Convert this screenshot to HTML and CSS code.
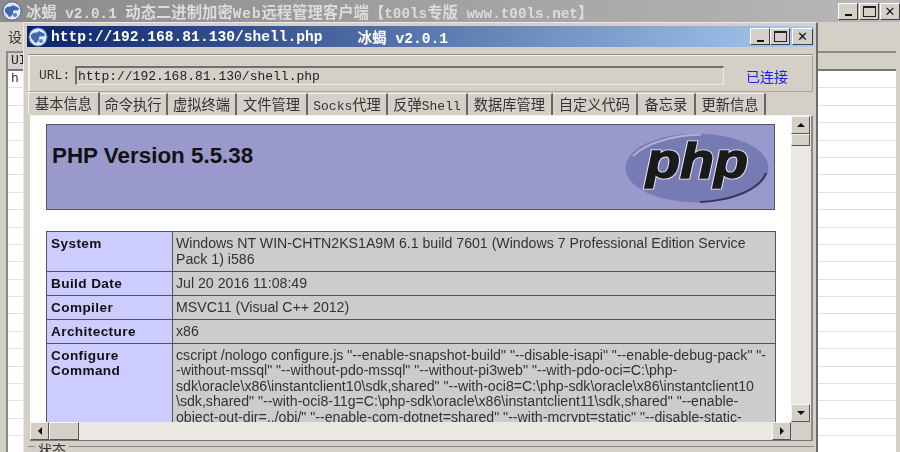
FILE: index.html
```html
<!DOCTYPE html>
<html lang="zh">
<head>
<meta charset="utf-8">
<title>冰蝎</title>
<link rel="stylesheet" href="styles.css">
</head>
<body>
<div class="screen">
  <div class="main-window">
    <div class="main-title">
      <svg class="app-icon" viewBox="0 0 20 20"><circle cx="10" cy="10" r="9.2" fill="#dfe8f4" stroke="#3c5f9e"/><path d="M3 8c3-4 6-1 8-4 2 2 5 1 6 4-2 3-4 0-6 2 1 3-2 6-4 6-1-3-5-4-4-8z" fill="#3f68ad"/><circle cx="13" cy="14" r="2" fill="#5a80bd"/></svg>
      <span class="main-caption">冰蝎<b class="cap-latin"> v2.0.1 </b>动态二进制加密<b class="cap-latin cap-web">Web</b>远程管理客户端【<b class="cap-latin">t00ls</b>专版<b class="cap-latin"> www.t00ls.net</b>】</span>
      <div class="win-buttons main-buttons">
        <span class="win-btn"><i class="g-min"></i></span><span class="win-btn"><i class="g-max"></i></span><span class="win-btn"><i class="g-close">✕</i></span>
      </div>
    </div>
    <div class="menu-row">设</div>
    <div class="list">
      <div class="list-head">UI</div>
      <div class="list-row">h</div>
      <div class="list-row"></div><div class="list-row"></div><div class="list-row"></div><div class="list-row"></div>
      <div class="list-row"></div><div class="list-row"></div><div class="list-row"></div><div class="list-row"></div>
      <div class="list-row"></div><div class="list-row"></div><div class="list-row"></div><div class="list-row"></div>
      <div class="list-row"></div><div class="list-row"></div><div class="list-row"></div><div class="list-row"></div>
      <div class="list-row"></div><div class="list-row"></div><div class="list-row"></div><div class="list-row"></div>
    </div>
  </div>

  <div class="shell-window">
    <div class="shell-title">
      <svg class="app-icon" viewBox="0 0 20 20"><circle cx="10" cy="10" r="9.2" fill="#dfe8f4" stroke="#3c5f9e"/><path d="M3 8c3-4 6-1 8-4 2 2 5 1 6 4-2 3-4 0-6 2 1 3-2 6-4 6-1-3-5-4-4-8z" fill="#3f68ad"/><circle cx="13" cy="14" r="2" fill="#5a80bd"/></svg>
      <span class="shell-url">http://192.168.81.130/shell.php</span>
      <span class="shell-name">冰蝎 v2.0.1</span>
      <div class="win-buttons">
        <span class="win-btn"><i class="g-min"></i></span><span class="win-btn"><i class="g-max"></i></span><span class="win-btn win-close"><i class="g-close">✕</i></span>
      </div>
    </div>
    <div class="url-group">
      <span class="url-label">URL:</span>
      <div class="url-input">http://192.168.81.130/shell.php</div>
      <span class="status-ok">已连接</span>
    </div>
    <div class="tabs">
      <span class="tab tab-active t1">基本信息</span>
      <span class="tab t2">命令执行</span>
      <span class="tab t3">虚拟终端</span>
      <span class="tab t4">文件管理</span>
      <span class="tab t5"><b class="latin">Socks</b>代理</span>
      <span class="tab t6">反弹<b class="latin">Shell</b></span>
      <span class="tab t7">数据库管理</span>
      <span class="tab t8">自定义代码</span>
      <span class="tab t9">备忘录</span>
      <span class="tab t10">更新信息</span>
    </div>
    <div class="panel">
      <div class="page">
        <div class="php-head">
          <h1 class="php-version">PHP Version 5.5.38</h1>
          <svg class="php-logo" viewBox="0 0 144 70">
            <ellipse cx="72" cy="35" rx="71.5" ry="34.5" fill="#777bb3"/>
            <path d="M8 23C24 7 56 2 76 1.5" fill="none" stroke="#aeb1d5" stroke-width="2"/>
            <path d="M141 40c-6 16-34 28-66 29" fill="none" stroke="#34345c" stroke-width="2"/>
            <text x="72" y="45" textLength="102" lengthAdjust="spacingAndGlyphs" class="php-logo-halo">php</text>
            <text x="72" y="45" textLength="102" lengthAdjust="spacingAndGlyphs" class="php-logo-text">php</text>
          </svg>
        </div>
        <table class="info">
          <tr><th>System</th><td>Windows NT WIN-CHTN2KS1A9M 6.1 build 7601 (Windows 7 Professional Edition Service<br>Pack 1) i586</td></tr>
          <tr><th>Build Date</th><td>Jul 20 2016 11:08:49</td></tr>
          <tr><th>Compiler</th><td>MSVC11 (Visual C++ 2012)</td></tr>
          <tr><th>Architecture</th><td>x86</td></tr>
          <tr><th>Configure<br>Command</th><td>cscript /nologo configure.js "--enable-snapshot-build" "--disable-isapi" "--enable-debug-pack" "-<br>-without-mssql" "--without-pdo-mssql" "--without-pi3web" "--with-pdo-oci=C:\php-<br>sdk\oracle\x86\instantclient10\sdk,shared" "--with-oci8=C:\php-sdk\oracle\x86\instantclient10<br>\sdk,shared" "--with-oci8-11g=C:\php-sdk\oracle\x86\instantclient11\sdk,shared" "--enable-<br>object-out-dir=../obj/" "--enable-com-dotnet=shared" "--with-mcrypt=static" "--disable-static-</td></tr>
        </table>
      </div>
      <div class="vbar">
        <span class="sb-btn"><i class="arr arr-up"></i></span>
        <span class="sb-thumb-v"></span>
        <span class="sb-track"></span>
        <span class="sb-btn"><i class="arr arr-down"></i></span>
      </div>
      <div class="hbar">
        <span class="sb-btn"><i class="arr arr-left"></i></span>
        <span class="sb-thumb-h"></span>
        <span class="sb-track"></span>
        <span class="sb-btn"><i class="arr arr-right"></i></span>
      </div>
      <div class="corner"></div>
    </div>
    <div class="status-group"><span class="status-label">状态</span></div>
  </div>
</div>
</body>
</html>
```

FILE: styles.css
```css
* { box-sizing: border-box; }
html, body { margin: 0; padding: 0; }
body { width: 900px; height: 452px; overflow: hidden; background: #d4d0c8; }
.screen {
  position: relative; width: 900px; height: 452px; overflow: hidden;
  font-family: "Liberation Mono", "Noto Sans CJK SC", monospace;
  color: #222; filter: blur(0.45px);
}
.main-window { height: 452px; display: flex; flex-direction: column; }
.main-title {
  height: 22px; flex: none; display: flex; align-items: center; padding-left: 2px;
  background: linear-gradient(90deg, #8b8b8b, #b8b8b8);
}
.app-icon { width: 20px; height: 20px; flex: none; }
.main-caption {
  margin-left: 4px; font: 700 15.35px/20px "Noto Sans CJK SC", sans-serif; color: #dcdcdc; white-space: pre;
}
.cap-latin { font: 700 14.3px "Liberation Mono", monospace; }
.cap-web { letter-spacing: 1px; }
.win-buttons { margin-left: auto; display: flex; gap: 0; }
.main-buttons { gap: 1px; }
.win-btn {
  width: 20px; height: 17px; background: #d4d0c8; display: flex; align-items: center; justify-content: center;
  border: 1px solid; border-color: #fff #404040 #404040 #fff; position: relative;
}
.win-close { margin-left: 2px; width: 21px; }
.win-btn i { font-style: normal; display: block; }
.g-min { width: 7px; height: 2px; background: #111; margin-top: 8px; }
.g-max { width: 13px; height: 11px; border: 1px solid #222; border-top-width: 2px; }
.g-close { font: 700 13px/1 "DejaVu Sans", sans-serif; color: #111; }
.menu-row {
  height: 29px; flex: none; padding: 6px 0 0 8px; font: 14px/16px "Noto Sans CJK SC", sans-serif; color: #333;
}
.list {
  margin: 0 4px 0 6px; flex: 1; background: #fff; overflow: hidden;
  border: 1px solid #8a8a8a; border-width: 2px 0 0 2px;
}
.list-head {
  height: 18px; background: #d4d0c8; border-bottom: 2px solid #777; font-size: 13px; padding-left: 3px; line-height: 16px;
}
.list-row {
  height: 17.4px; border-bottom: 1px solid #e4e2dc; font-size: 13px; line-height: 16px; padding-left: 3px; color: #333;
}
.shell-window {
  position: absolute; left: 23px; top: 22px; width: 795px; height: 440px;
  background: #d4d0c8; border: 1px solid; border-color: #eceae5 #6c6c6c #6c6c6c #eceae5;
  border-right-width: 2px; padding: 3px 2px 0 3px; display: flex; flex-direction: column;
}
.shell-title {
  height: 21px; flex: none; display: flex; align-items: center; padding: 0 1px 0 1px;
  background: linear-gradient(90deg, #0a246a, #a6caf0);
}
.shell-url { margin-left: 3px; font-size: 14.6px; font-weight: 700; color: #fff; }
.shell-name { margin-left: 35px; font-size: 14.6px; font-weight: 700; color: #fff; white-space: pre; }
.url-group {
  flex: none; height: 38px; margin: 7px 1px 0 1px; padding: 5px 0 0 10px; display: flex; align-items: center;
  border: 1px solid; border-color: #8e8c86 #a8a6a0 #a8a6a0 #f0efea; box-shadow: inset 1px 1px 0 #f4f3ef;
}
.url-label { font-size: 13px; color: #333; width: 36px; }
.url-input {
  width: 649px; height: 19px; font-size: 13px; line-height: 17px; padding-left: 1px; color: #222;
  border: 1px solid; border-width: 2px 1px 1px 2px; border-color: #6f6f6f #eeeee8 #eeeee8 #6f6f6f;
}
.status-ok { margin-left: 22px; font: 14px/16px "Noto Sans CJK SC", sans-serif; color: #2020ee; }
.tabs { flex: none; height: 23px; display: flex; margin-left: 1px; font: 14.25px/20px "Noto Sans CJK SC", sans-serif; color: #333; }
.tab {
  height: 22px; margin-top: 1px; text-align: center; white-space: nowrap;
  border-right: 2px solid #666; border-top: 1px solid #f2f1ec;
}
.tab-active { margin-top: 0; height: 23px; background: #d4d0c8; border-left: 1px solid #f4f3ee; }
.latin { font: 400 13px "Liberation Mono", monospace; }
.t1 { width: 72px; } .t2 { width: 68px; } .t3 { width: 69px; } .t4 { width: 71px; }
.t5 { width: 80px; } .t6 { width: 80px; } .t7 { width: 85px; } .t8 { width: 85px; }
.t9 { width: 58px; } .t10 { width: 70px; }
.panel {
  flex: none; height: 326px; margin-left: 3px; margin-right: 1px; display: grid;
  grid-template-columns: 761px 20px; grid-template-rows: 306px 18px;
  border-top: 1px solid #f2f1ec; border-right: 2px solid #8c8a84; border-bottom: 1px solid #777;
}
.page { background: #fff; overflow: hidden; padding: 8px 0 0 16px; font-family: "Liberation Sans", Arial, sans-serif; color: #222; }
.php-head {
  width: 729px; height: 86px; background: #9999cc; border: 1px solid #555566; display: flex; justify-content: space-between; position: relative;
}
.php-version { margin: 18px 0 0 5px; font-size: 22.4px; line-height: 26px; font-weight: 700; color: #111; }
.php-logo { width: 144px; height: 70px; margin: 8px 5px 0 0; }
.php-logo-text {
  font: italic 700 50px "Liberation Sans", sans-serif; text-anchor: middle; fill: #1a1a1a; stroke: #1a1a1a; stroke-width: 1.4px;
}
.php-logo-halo {
  font: italic 700 50px "Liberation Sans", sans-serif; text-anchor: middle; fill: none; stroke: #e8e8f4; stroke-width: 3.2px;
}
.info { margin-top: 21px; width: 730px; border-collapse: collapse; table-layout: fixed; font-size: 14.15px; line-height: 15.5px; }
.info th, .info td { border: 1px solid #555; padding: 4px 0 3.5px 3px; vertical-align: top; text-align: left; white-space: nowrap; overflow: hidden; }
.info th { width: 126px; padding-left: 4px; background: #ccccff; font-weight: 700; font-size: 13.6px; color: #111; letter-spacing: 0.4px; }
.info td { background: #cccccc; color: #333; }
.vbar { display: flex; flex-direction: column; background: #e9e7e2; }
.hbar { display: flex; background: #e9e7e2; }
.sb-track { flex: 1; background: #eae8e3; }
.sb-btn {
  width: 19px; height: 18px; flex: none; background: #d4d0c8; display: flex; align-items: center; justify-content: center;
  border: 1px solid; border-color: #f6f5f1 #555 #555 #f6f5f1;
}
.sb-thumb-v { width: 19px; height: 12px; flex: none; background: #d4d0c8; border: 1px solid; border-color: #f6f5f1 #555 #555 #f6f5f1; }
.sb-thumb-h { width: 30px; height: 18px; flex: none; background: #d4d0c8; border: 1px solid; border-color: #f6f5f1 #555 #555 #f6f5f1; }
.arr { display: block; width: 0; height: 0; border: 4px solid transparent; }
.arr-up { border-bottom-color: #111; border-top-width: 0; }
.arr-down { border-top-color: #111; border-bottom-width: 0; }
.arr-left { border-right-color: #111; border-left-width: 0; }
.arr-right { border-left-color: #111; border-right-width: 0; }
.corner { background: #d4d0c8; }
.status-group { flex: 1; margin-top: 5px; margin-left: 1px; border-top: 1px solid #8a8a8a; }
.status-label {
  display: inline-block; margin: -6px 0 0 7px; padding: 0 3px; background: #d4d0c8; font: 14px/16px "Noto Sans CJK SC", sans-serif; color: #333; transform: translateY(-5px);
}
```
